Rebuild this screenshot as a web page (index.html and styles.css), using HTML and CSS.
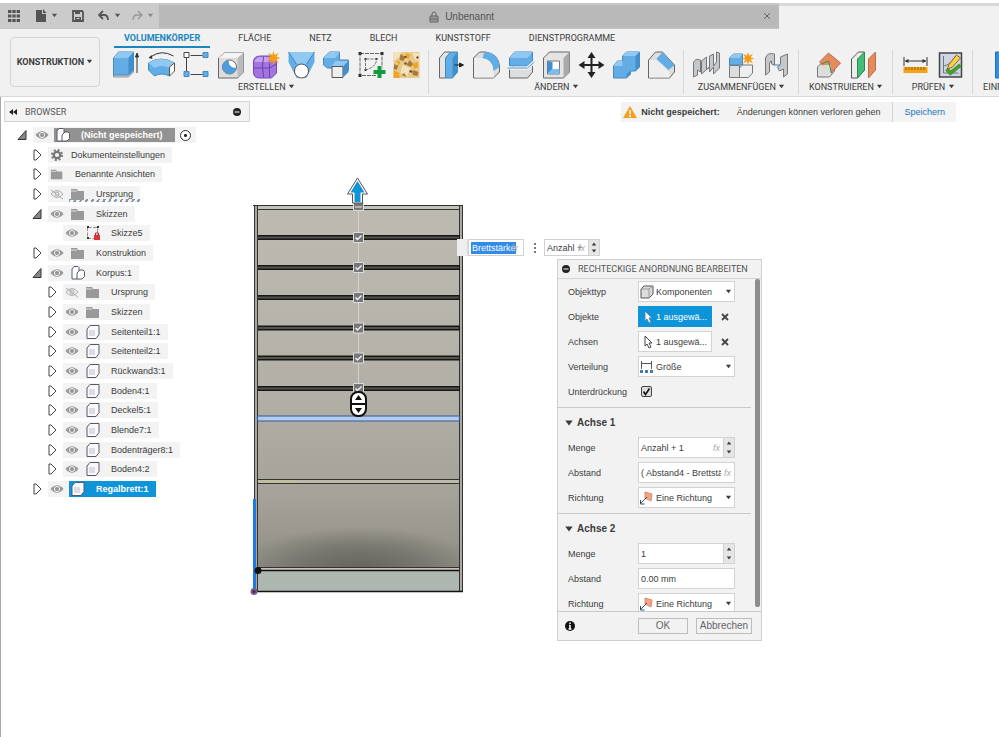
FILE: index.html
```html
<!DOCTYPE html>
<html lang="de">
<head>
    <meta charset="UTF-8">
    <meta name="viewport" content="width=device-width, initial-scale=1.0">
    <title>Unbenannt</title>
    <link rel="stylesheet" href="styles.css">
</head>
<body>
    <!-- Shared icons -->
    <svg class="sprite" aria-hidden="true">
        <symbol id="closed" viewBox="0 0 16 16"><path d="M5 3h2l5 5-5 5H5z" fill="#fff" stroke="#444" stroke-linejoin="round"/></symbol>
        <symbol id="open" viewBox="0 0 16 16"><path d="M12 3.500v9H4z" fill="#888" stroke="#333"/></symbol>
        <symbol id="eye" viewBox="0 0 14 14"><path d="M.5 7Q7-.5 13.500 7 7 14.500.5 7z" fill="#999"/><circle cx="7" cy="7" r="2.600" fill="#999" stroke="#eee"/></symbol>
        <symbol id="eye-off" viewBox="0 0 14 14"><g fill="none" stroke="#aaa"><path d="M1 7Q7 0 13 7 7 14 1 7zM1 3l12 9"/><circle cx="7" cy="7" r="2"/></g></symbol>
        <symbol id="folder" viewBox="0 0 16 14"><path d="M1 2h6l1 2h6v9H1z" fill="#999"/><path d="M1 4h6" stroke="#ddd"/></symbol>
        <symbol id="body" viewBox="0 0 16 16"><path d="M2 5l3-3.500h9v9L11 14.500H2z" fill="#fafafd" stroke="#555a66" stroke-linejoin="round"/><path d="M4 6h6v6H4z" fill="#dcdce6"/></symbol>
        <symbol id="component" viewBox="0 0 16 16"><path d="M2 4l2-2.500h4l1 1V6l1-1h3l1.500 1.500v5L12 14H2z" fill="#fff" stroke="#555a66" stroke-linejoin="round"/><path d="M7 14V8l2-2" fill="none" stroke="#555a66"/></symbol>
        <symbol id="down" viewBox="0 0 8 8"><path d="M1 2h6L4 6z" fill="currentColor"/></symbol>
        <symbol id="up" viewBox="0 0 8 8"><path d="M1 6h6L4 2z" fill="currentColor"/></symbol>
        <symbol id="minus" viewBox="0 0 10 10"><circle cx="5" cy="5" r="4" fill="#222"/><path d="M2.500 5h5" stroke="#fff"/></symbol>
        <symbol id="direction" viewBox="0 0 16 16"><path d="M6 2l7 2-1 7-6-3z" fill="#f0a483" stroke="#d98c6c"/><path d="M2 13l6-6M1.500 10v4h4" fill="none" stroke="#34495e"/></symbol>
        <symbol id="star" viewBox="0 0 12 12"><path d="M6 0l1 3.500L10.500 1.500 8.500 5 12 6 8.500 7l2 3.500L7 8.500 6 12 5 8.500 1.500 10.500 3.500 7 0 6l3.500-1-2-3.500L5 3.500z" fill="#f59b14"/></symbol>
    </svg>

    <header class="titlebar">
        <div class="quick">
            <button aria-label="Datenbedienfeld"><svg width="14" height="14"><path d="M1 2.500h12M1 7h12M1 11.500h12" stroke="#555" stroke-width="3.200" stroke-dasharray="3.400 .9"/></svg></button>
            <button class="file" aria-label="Datei"><svg width="12" height="14"><path d="M1 1h6v4h4v8H1zM8 0l3.500 4H8z" fill="#555"/></svg><svg class="caret"><use href="#down"/></svg></button>
            <button class="save" aria-label="Speichern"><svg width="12" height="12"><path d="M1 1h9l1 1v9H1z" fill="none" stroke="#555" stroke-width="1.800"/><path d="M3 1h5v3H3zM3 7h6v4H3z" fill="#555"/><path d="M4.500 8.500h3" stroke="#ccc"/></svg></button>
            <button aria-label="Rückgängig"><svg width="12" height="12"><path d="M5 1L1 5l4 4M1 5h5q4 0 4 5" fill="none" stroke="#555" stroke-width="1.800"/></svg><svg class="caret"><use href="#down"/></svg></button>
            <button class="redo" aria-label="Wiederherstellen"><svg width="12" height="12"><path d="M7 1l4 4-4 4M11 5H6q-4 0-4 5" fill="none" stroke="#999" stroke-width="1.400"/></svg><svg class="caret"><use href="#down"/></svg></button>
        </div>
        <div class="doc-tab">
            <span class="doc-name"><svg width="12" height="12"><path d="M2 5h8v6H2z" fill="#999" stroke="#666"/><path d="M4 5V3q0-2 2-2t2 2v2M2 8h8" fill="none" stroke="#666"/></svg>Unbenannt</span>
            <button aria-label="Schließen"><svg width="8" height="8"><path d="M1 1l6 6M7 1L1 7" stroke="#666"/></svg></button>
        </div>
        <div class="new-tab"></div>
    </header>

    <section class="ribbon">
        <button class="mode">KONSTRUKTION <svg class="caret"><use href="#down"/></svg></button>
        <div class="tools">
            <nav class="tabs">
                <button class="active">VOLUMENKÖRPER</button>
                <button>FLÄCHE</button>
                <button>NETZ</button>
                <button>BLECH</button>
                <button>KUNSTSTOFF</button>
                <button>DIENSTPROGRAMME</button>
            </nav>
            <div class="groups">
                <div class="group">
                    <div class="icons">
                        <svg viewBox="0 0 28 28"><path d="M1 22v4h15l5-5v-4z" fill="#ccc" stroke="#999"/><path d="M1 7l5-6h15v18l-5 5H1z" fill="#62ade6" stroke="#4788be"/><path d="M1 7l5-6h15l-5 6z" fill="#90c8f2"/><path d="M16 7l5-6v18l-5 5z" fill="#418fcc"/><path d="M24.500 22V4M23 6l1.500-4L26 6z" stroke="#333" fill="#333"/></svg>
                        <svg viewBox="0 0 28 28"><path d="M3 6Q14-2 26 5" fill="none" stroke="#333"/><path d="M1 7l3-3 1 4z" fill="#333"/><path d="M1 12Q13 4 27 12l-5 5v8q-8-4-15 0L1 19z" fill="#62ade6" stroke="#4788be"/><path d="M1 12Q13 4 27 12l-5 5q-8-4-15 0z" fill="#90c8f2"/><path d="M22 16l5-4v8l-5 5z" fill="#fff" stroke="#555"/></svg>
                        <svg viewBox="0 0 28 28"><path d="M4 7v14M8 4.500h12M8 23.500h12" stroke="#444"/><path d="M1.500 1.500h5v5h-5z" fill="#fff" stroke="#444"/><path d="M20.500 1.500h5v5h-5zM20.500 20.500h5v5h-5zM1.500 20.500h5v5h-5z" fill="#62ade6" stroke="#4788be"/></svg>
                        <svg viewBox="0 0 28 28"><path d="M1 7l6-5h19v19l-6 6H1z" fill="#ddd" stroke="#666"/><path d="M1 7l6-5h19l-6 5z" fill="#f4f4f4"/><path d="M20 7l6-5v19l-6 6z" fill="#bbb"/><circle cx="12" cy="16" r="7" fill="#fff" stroke="#667"/><path d="M11 9q-7 2-6 8t8 6q6-1 6-6-8 0-8-8z" fill="#4f9cda"/></svg>
                        <svg viewBox="0 0 28 28"><path d="M1 11q0-6 7-6h12l4 4v13l-5 5H7q-6 0-6-6z" fill="#a274e0" stroke="#7349b5"/><path d="M2 11q1-5 7-5h10l-4 5z" fill="#c5a5f2"/><path d="M11 6q-2 8 0 20M1 17h16l7-4M17 10v16" stroke="#6a42a8" fill="none"/><use href="#star" x="14" y="0" width="14" height="14"/></svg>
                        <svg viewBox="0 0 28 28"><path d="M1 1h26v10L19 27H9L1 11z" fill="#62ade6"/><path d="M1 1l8 12h10l8-12z" fill="#90c8f2"/><path d="M0 12l9 15H0zM28 12l-9 15h9z" fill="#f1f1f1"/><path d="M1 1l8 12M27 1l-8 12" stroke="#4788be" fill="none"/><circle cx="14" cy="20" r="7" fill="#fff" stroke="#555"/></svg>
                        <svg viewBox="0 0 28 28"><path d="M1 7l6-6h10v8h9v10l-5 5h-8v-7H5l-4-3z" fill="#62ade6" stroke="#4788be"/><path d="M1 7l6-6h10l-4 6z" fill="#90c8f2"/><path d="M9 15l4-5h13l-5 5z" fill="#90c8f2"/><path d="M9.500 15.500h11v11h-11z" fill="#eee" stroke="#555"/><path d="M21 15l5-5v11l-5 5z" fill="#418fcc"/></svg>
                        <svg viewBox="0 0 28 28"><path d="M2.500 2.500h22v22h-22z" fill="none" stroke="#444" stroke-width=".8" stroke-dasharray="4 1"/><path d="M1 1h3v3H1zM23 1h3v3h-3zM1 23h3v3H1zM7 7h2v2H7zM18 7h2v2h-2zM7 18h2v2H7z" fill="#333"/><path d="M8 19V8h11q0 8-11 11" fill="none" stroke="#555" stroke-width=".8" stroke-dasharray="3 1"/><path d="M16 21h12M22 15v12" stroke="#f1f1f1" stroke-width="6"/><path d="M16 21h12M22 15v12" stroke="#169b3c" stroke-width="4"/></svg>
                        <svg viewBox="0 0 28 28"><path d="M1 1h26v26H1z" fill="#e9c98a"/><path d="M1 1h8l-3 6-5 3zM10 14l8 3-4 9-6-4zM20 2h7v8l-5-2z" fill="#f3e3bd"/><path d="M8 3l5 3-2 4-4-1zM17 9l4 4-3 3-4-2zM2 13l4 2-2 4-3-1zM21 19l5 2-1 4-5-1zM9 24l3-2 2 4z" fill="#a87a3c"/><path d="M14 2l4 2-2 4-4-2zM4 9l4 2-2 4zM20 13l5-2 1 5-4 2zM1 19l6 3v5H1z" fill="#eda526"/><path d="M12 6h2M12 12l2 1M17 20l3 1M24 6l2 1" stroke="#6e5028" stroke-width="2"/></svg>
                    </div>
                    <button>ERSTELLEN <svg class="caret"><use href="#down"/></svg></button>
                </div>
                <div class="group">
                    <div class="icons">
                        <svg viewBox="0 0 28 28"><path d="M2 7l5-6h6v20l-5 6H2z" fill="#e5e5e5" stroke="#666"/><path d="M8 7l5-6h7v20l-5 6H8z" fill="#62ade6" stroke="#4788be"/><path d="M15 7l5-6v20l-5 6z" fill="#418fcc"/><path d="M17 14h7M22 12l4 2-4 2z" stroke="#222" fill="#222"/></svg>
                        <svg viewBox="0 0 28 28"><path d="M1 7l6-6h6q13 2 14 14v6l-6 6H1z" fill="#ddd" stroke="#666"/><path d="M1.500 7h9q10 2 11 12v7.500h-20z" fill="#eee"/><path d="M12 1q14 0 15 15l-6 4Q21 9 10 7z" fill="#62ade6"/></svg>
                        <svg viewBox="0 0 28 28"><path d="M2 18l5-4h18v7l-5 6H2z" fill="#ddd" stroke="#666"/><path d="M2 7l5-6h18v9l-5 5H2z" fill="#62ade6" stroke="#4788be"/><path d="M2 7l5-6h18l-5 6z" fill="#90c8f2"/><path d="M0 17h20l7-6" fill="none" stroke="#fff" stroke-width="3"/><path d="M0 17h20l7-6" fill="none" stroke="#418fcc"/></svg>
                        <svg viewBox="0 0 28 28"><path d="M1 7l6-6h20v20l-6 6H1z" fill="#e4e4e4" stroke="#666"/><path d="M21 7l6-6v20l-6 6z" fill="#aaa"/><path d="M5 10h12v13H5z" fill="#fff" stroke="#777"/><path d="M5 10l5 1v7l-5 5z" fill="#418fcc"/><path d="M10 18h7v5H5z" fill="#7abdf0"/></svg>
                        <svg viewBox="0 0 28 28"><path d="M14 4v20M4 14h20" stroke="#222" stroke-width="2"/><path d="M14 1l4 6h-8zM14 27l4-6h-8zM1 14l6-4v8zM27 14l-6-4v8z" fill="#222"/></svg>
                        <svg viewBox="0 0 28 28"><path d="M1 15l4-5h5V5l4-4h13v15l-4 4h-5v3l-4 4H1z" fill="#62ade6" stroke="#4788be"/><path d="M10 5l4-4h13l-4 4zM1 15l4-5h5v5z" fill="#90c8f2"/><path d="M23 5l4-4v15l-4 4zM18 20v3l-4 4v-4z" fill="#418fcc"/></svg>
                        <svg viewBox="0 0 28 28"><path d="M1 9l7-8h7l12 13v7l-5 6H1z" fill="#ddd" stroke="#666"/><path d="M1.500 9h7.500l13 12v5.500H1.500z" fill="#eee"/><path d="M15 1l12 13-6 5L9 8z" fill="#62ade6"/></svg>
                    </div>
                    <button>ÄNDERN <svg class="caret"><use href="#down"/></svg></button>
                </div>
                <div class="group">
                    <div class="icons">
                        <svg viewBox="0 0 28 28"><path d="M1 26V12q1-5 7-3v12l-3-2v5zM9 23V10l5-4v12l3-2V5l4-2v12l3-4V1l3 1v15l-6 6v-7l-4 5v-5z" fill="#c5c8ca" stroke="#777" stroke-linejoin="round"/></svg>
                        <svg viewBox="0 0 28 28"><path d="M2 7l4-4h9v11H2z" fill="#62ade6" stroke="#4788be"/><path d="M2 7l4-4h9l-3 4z" fill="#90c8f2"/><path d="M2 14.500h10v12H2z" fill="#ddd" stroke="#777"/><path d="M12 17l3-3h10v8l-4 4.500h-9z" fill="#eee" stroke="#777"/><use href="#star" x="14" y="1" width="13" height="13"/></svg>
                        <svg viewBox="0 0 28 28"><path d="M3 24V7q2-6 9-4v11l-3-1v-3q-2 0-2 3v8zM15 16l3-3V6l7-3v20l-4 3v-8l-4 2z" fill="#c5c8ca" stroke="#777" stroke-linejoin="round"/><path d="M11 14h7" stroke="#4788be"/></svg>
                    </div>
                    <button>ZUSAMMENFÜGEN <svg class="caret"><use href="#down"/></svg></button>
                </div>
                <div class="group wide">
                    <div class="icons">
                        <svg viewBox="0 0 28 28"><path d="M3 16l5-5h12v9l-5 6H3z" fill="#ddd" stroke="#777"/><path d="M14 2l12 10-9 10L5 11z" fill="#e58a5c" stroke="#c06f43"/><path d="M8 14h8v8z" fill="#cfe6d4"/><path d="M7 13l7-3 3 12" fill="none" stroke="#3a8b57"/></svg>
                        <svg viewBox="0 0 28 28"><path d="M2 8l7-7h6v18l-7 8H2z" fill="#eee" stroke="#555"/><path d="M8 8l7-7v18l-7 8z" fill="#45bd74" stroke="#2b8850"/><path d="M19 8l7-7v18l-7 8z" fill="#e58a5c" stroke="#c06f43"/></svg>
                    </div>
                    <button>KONSTRUIEREN <svg class="caret"><use href="#down"/></svg></button>
                </div>
                <div class="group">
                    <div class="icons">
                        <svg viewBox="0 0 28 28"><path d="M2.500 6v9M25.500 6v9M4 10h20" stroke="#333"/><path d="M3 10l4-2v4zM25 10l-4-2v4z" fill="#333"/><path d="M2 16h24v6H2z" fill="#f3a313"/><path d="M4.500 16v3M7.500 16v3M10.500 16v3M13.500 16v3M16.500 16v3M19.500 16v3M22.500 16v3" stroke="#8b5a00"/></svg>
                        <svg viewBox="0 0 28 28"><path d="M3 2h22v24H3z" fill="#cfd5e6" stroke="#444" stroke-width="1.500"/><path d="M7 5v17h15M7 15q7-1 12-10" fill="none" stroke="#777"/><path d="M10 18l4 4 10-8" fill="none" stroke="#4b9a35" stroke-width="4"/><path d="M12 14l8-10 4 3-8 9-5 2z" fill="#f3d24c" stroke="#8b6a20"/></svg>
                    </div>
                    <button>PRÜFEN <svg class="caret"><use href="#down"/></svg></button>
                </div>
                <div class="group last">
                    <div class="icons"><svg viewBox="0 0 28 28"><path d="M1 1h26v26H1z" fill="#2d8fe0" stroke="#1e6fb3"/><path d="M4 23l8-9 8 9z" fill="#b8dcf7"/></svg></div>
                    <button>EINFÜGEN <svg class="caret"><use href="#down"/></svg></button>
                </div>
            </div>
        </div>
    </section>

    <main class="workspace">
        <aside class="browser">
            <h2 class="browser-head"><svg width="10" height="8"><path d="M5 1v6L1 4zM9 1v6L5 4z" fill="#222"/></svg>BROWSER<svg class="dot"><use href="#minus"/></svg></h2>
            <ul class="tree">
                <li><svg class="toggle"><use href="#open"/></svg><div class="node"><svg class="eye"><use href="#eye"/></svg><span class="label root"><svg class="icon"><use href="#component"/></svg>(Nicht gespeichert)</span><input type="radio" checked aria-label="Komponente aktivieren"></div></li>
                <li class="l1"><svg class="toggle"><use href="#closed"/></svg><div class="node"><svg class="eye" viewBox="0 0 14 14"><circle cx="7" cy="7" r="3.200" fill="none" stroke="#777" stroke-width="2.200"/><circle cx="7" cy="7" r="5" fill="none" stroke="#777" stroke-width="2" stroke-dasharray="2 1.930"/></svg><span class="label plain">Dokumenteinstellungen</span></div></li>
                <li class="l1"><svg class="toggle"><use href="#closed"/></svg><div class="node"><svg class="eye"><use href="#folder"/></svg><span class="label plain views">Benannte Ansichten</span></div></li>
                <li class="l1"><svg class="toggle"><use href="#closed"/></svg><div class="node"><svg class="eye"><use href="#eye-off"/></svg><span class="label marked"><svg class="icon"><use href="#folder"/></svg>Ursprung</span></div></li>
                <li class="l1"><svg class="toggle"><use href="#open"/></svg><div class="node"><svg class="eye"><use href="#eye"/></svg><span class="label"><svg class="icon"><use href="#folder"/></svg>Skizzen</span></div></li>
                <li class="l2"><svg class="toggle"></svg><div class="node"><svg class="eye"><use href="#eye"/></svg><span class="label"><svg class="icon" viewBox="0 0 16 16"><path d="M2.500 2.500h10v11h-10z" fill="none" stroke="#777" stroke-width=".8" stroke-dasharray="4 1.500"/><path d="M2 1h2v2H2zM12 1h2v2h-2zM2 12h2v2H2z" fill="#333"/><path d="M9 10h6v5H9z" fill="#d9333f"/><path d="M10.500 10V8h3v2" fill="none" stroke="#b5202d"/></svg>Skizze5</span></div></li>
                <li class="l1"><svg class="toggle"><use href="#closed"/></svg><div class="node"><svg class="eye"><use href="#eye"/></svg><span class="label"><svg class="icon"><use href="#folder"/></svg>Konstruktion</span></div></li>
                <li class="l1"><svg class="toggle"><use href="#open"/></svg><div class="node"><svg class="eye"><use href="#eye"/></svg><span class="label"><svg class="icon"><use href="#component"/></svg>Korpus:1</span></div></li>
                <li class="l2"><svg class="toggle"><use href="#closed"/></svg><div class="node"><svg class="eye"><use href="#eye-off"/></svg><span class="label"><svg class="icon"><use href="#folder"/></svg>Ursprung</span></div></li>
                <li class="l2"><svg class="toggle"><use href="#closed"/></svg><div class="node"><svg class="eye"><use href="#eye"/></svg><span class="label"><svg class="icon"><use href="#folder"/></svg>Skizzen</span></div></li>
                <li class="l2"><svg class="toggle"><use href="#closed"/></svg><div class="node"><svg class="eye"><use href="#eye"/></svg><span class="label"><svg class="icon"><use href="#body"/></svg>Seitenteil1:1</span></div></li>
                <li class="l2"><svg class="toggle"><use href="#closed"/></svg><div class="node"><svg class="eye"><use href="#eye"/></svg><span class="label"><svg class="icon"><use href="#body"/></svg>Seitenteil2:1</span></div></li>
                <li class="l2"><svg class="toggle"><use href="#closed"/></svg><div class="node"><svg class="eye"><use href="#eye"/></svg><span class="label"><svg class="icon"><use href="#body"/></svg>Rückwand3:1</span></div></li>
                <li class="l2"><svg class="toggle"><use href="#closed"/></svg><div class="node"><svg class="eye"><use href="#eye"/></svg><span class="label"><svg class="icon"><use href="#body"/></svg>Boden4:1</span></div></li>
                <li class="l2"><svg class="toggle"><use href="#closed"/></svg><div class="node"><svg class="eye"><use href="#eye"/></svg><span class="label"><svg class="icon"><use href="#body"/></svg>Deckel5:1</span></div></li>
                <li class="l2"><svg class="toggle"><use href="#closed"/></svg><div class="node"><svg class="eye"><use href="#eye"/></svg><span class="label"><svg class="icon"><use href="#body"/></svg>Blende7:1</span></div></li>
                <li class="l2"><svg class="toggle"><use href="#closed"/></svg><div class="node"><svg class="eye"><use href="#eye"/></svg><span class="label"><svg class="icon"><use href="#body"/></svg>Bodenträger8:1</span></div></li>
                <li class="l2"><svg class="toggle"><use href="#closed"/></svg><div class="node"><svg class="eye"><use href="#eye"/></svg><span class="label"><svg class="icon"><use href="#body"/></svg>Boden4:2</span></div></li>
                <li class="l1"><svg class="toggle"><use href="#closed"/></svg><div class="node"><svg class="eye"><use href="#eye"/></svg><span class="label selected"><svg class="icon"><use href="#body"/></svg>Regalbrett:1</span></div></li>
            </ul>
        </aside>

        <div class="notice">
            <svg width="14" height="12"><path d="M7 0l7 12H0z" fill="#f2a023"/><path d="M7 4v4M7 9v2" stroke="#fff" stroke-width="1.500"/></svg>
            <strong>Nicht gespeichert:</strong>
            <span>Änderungen können verloren gehen</span>
            <a href="#">Speichern</a>
        </div>

        <!-- Shelf model -->
        <svg class="model" viewBox="246 173 222 426" role="img" aria-label="Korpus">
            <defs>
                <linearGradient id="panel" x1="0" y1="0" x2="0" y2="1">
                    <stop offset="0" stop-color="#bcbab1"/>
                    <stop offset=".5" stop-color="#b2b0a7"/>
                    <stop offset=".8" stop-color="#a5a399"/>
                    <stop offset="1" stop-color="#908e85"/>
                </linearGradient>
                <radialGradient id="shade" cx=".5" cy="1" r=".6">
                    <stop offset="0" stop-color="#66655e"/>
                    <stop offset=".5" stop-color="#66655e" stop-opacity=".6"/>
                    <stop offset="1" stop-color="#66655e" stop-opacity="0"/>
                </radialGradient>
            </defs>
            <path d="M254 206h209v386H254z" fill="#aaa9a1"/>
            <path d="M258 209h201v358H258z" fill="url(#panel)"/>
            <path d="M258 500h201v67H258z" fill="url(#shade)"/>
            <path d="M258 206h201v3H258z" fill="#c3c2b9"/>
            <path d="M258 571h201v20H258z" fill="#aeb6b0"/>
            <path d="M258 567h201v3H258z" fill="#c8bfb9"/>
            <g fill="none" stroke="#33322f">
                <path d="M254.500 592V205.500h208V592M253 205.500h210M257.500 206v385M459.500 206v385M258 209.500h201"/>
                <path d="M258 479.500h201M258 483.500h201M258 567.500h201"/>
                <path d="M258 570.500h201M253 591.500h210" stroke="#111" stroke-width="1.500"/>
            </g>
            <path d="M258 480h201v3H258z" fill="#bdbbae"/>
            <path d="M258 482h40" stroke="#c9bf87"/>
            <path d="M258 237.500h202M258 267.500h202M258 297.500h202M258 328h202M258 358h202M258 388.500h202" stroke="#171715" stroke-width="5"/>
            <path d="M258 237.500h201M258 267.500h201M258 297.500h201M258 328h201M258 358h201M258 388.500h201" stroke="#55534e" stroke-width="2"/>
            <path d="M257.500 416h202v5h-202z" fill="#b3cbec" stroke="#35569a" stroke-width="1.200"/>
            <path d="M358.500 210v180" stroke="#ddd" stroke-opacity=".7"/>
            <g fill="#777" stroke="#ddd">
                <path d="M353.500 202.500h10v8h-10zM353.500 232.500h10v10h-10zM353.500 262.500h10v10h-10zM353.500 292.500h10v10h-10zM353.500 323h10v10h-10zM353.500 353h10v10h-10zM353.500 383.500h10v10h-10z"/>
            </g>
            <path d="M355 207h7" stroke="#eee"/>
            <path d="M355.500 237.500l2 2 4-4M355.500 267.500l2 2 4-4M355.500 297.500l2 2 4-4M355.500 328l2 2 4-4M355.500 358l2 2 4-4M355.500 388.500l2 2 4-4" fill="none" stroke="#eee" stroke-width="1.500"/>
            <path d="M357.500 178l10 16h-5v9h-10v-9h-5z" fill="#fff" stroke="#555"/>
            <path d="M357.500 181l7 11.500h-4V202h-6v-9.500h-4z" fill="#0f94d6"/>
            <rect x="351" y="392" width="15" height="24" rx="7" fill="#fff" stroke="#111" stroke-width="2"/>
            <path d="M351 404h15" stroke="#111" stroke-width="2"/>
            <path d="M355 400l3.500-5 3.500 5zM355 408l3.500 5 3.500-5z" fill="#111"/>
            <path d="M254.500 499v91" stroke="#1c7be0" stroke-width="3"/>
            <circle cx="258" cy="570.500" r="3.500" fill="#111"/>
            <circle cx="254" cy="591.500" r="2.500" fill="#333" stroke="#7b5a96" stroke-width="2"/>
        </svg>

        <!-- Value boxes on the canvas -->
        <div class="floating">
            <span class="grip"></span>
            <div class="edit"><input class="marked-value" value="Brettstärke" aria-label="Brettstärke"><em>fx</em></div>
            <svg class="more" width="4" height="12"><path d="M0 1h2v2H0zM0 5h2v2H0zM0 9h2v2H0z" fill="#777"/></svg>
            <div class="edit count"><input value="Anzahl + 1" aria-label="Anzahl"><em>fx</em><span class="spin"><button aria-label="Mehr"><svg class="caret"><use href="#up"/></svg></button><button aria-label="Weniger"><svg class="caret"><use href="#down"/></svg></button></span></div>
        </div>

        <form class="dialog">
            <h2 class="dialog-head"><svg class="dot"><use href="#minus"/></svg>RECHTECKIGE ANORDNUNG BEARBEITEN</h2>
            <div class="dialog-body">
                <div class="fields">
                    <section>
                        <div class="row"><label for="type">Objekttyp</label><div class="pick"><svg class="icon" viewBox="0 0 16 16"><path d="M2 5l3-3h9v8l-4 4H2z" fill="#ddd" stroke="#555"/><path d="M2 5h8v9M10 5l4-3" fill="none" stroke="#999"/></svg><select id="type"><option>Komponenten</option></select><svg class="caret"><use href="#down"/></svg></div></div>
                        <div class="row"><label for="objects">Objekte</label><button type="button" id="objects" class="choose on"><svg width="10" height="14"><path d="M2 1v10l2-2 2 4 2-1-2-4h3z" fill="#fff" stroke="#58a"/></svg>1 ausgewä...</button><button type="button" class="clear" aria-label="Objekte löschen"><svg width="8" height="8"><path d="M1 1l6 6M7 1L1 7" stroke="#444" stroke-width="1.800"/></svg></button></div>
                        <div class="row"><label for="axes">Achsen</label><button type="button" id="axes" class="choose"><svg width="10" height="14"><path d="M2 1v10l2-2 2 4 2-1-2-4h3z" fill="#fff" stroke="#444"/></svg>1 ausgewä...</button><button type="button" class="clear" aria-label="Achsen löschen"><svg width="8" height="8"><path d="M1 1l6 6M7 1L1 7" stroke="#444" stroke-width="1.800"/></svg></button></div>
                        <div class="row"><label for="spread">Verteilung</label><div class="pick"><svg class="icon" viewBox="0 0 16 16"><path d="M2.500 2v8M12.500 2v8M3 4.500h9" stroke="#555"/><path d="M1 11h3v3H1zM6 11h3v3H6zM11 11h3v3h-3z" fill="#467aa8"/></svg><select id="spread"><option>Größe</option></select><svg class="caret"><use href="#down"/></svg></div></div>
                        <div class="row"><label for="suppress">Unterdrückung</label><span class="check"><input type="checkbox" id="suppress" checked><svg width="11" height="11"><path d="M2.500 5.500l2 3 4-6" fill="none" stroke="#111" stroke-width="1.600"/></svg></span></div>
                    </section>
                    <section>
                        <h3><svg class="caret"><use href="#down"/></svg>Achse 1</h3>
                        <div class="row"><label for="count1">Menge</label><div class="edit"><input id="count1" value="Anzahl + 1"><em>fx</em><span class="spin"><button type="button" aria-label="Mehr"><svg class="caret"><use href="#up"/></svg></button><button type="button" aria-label="Weniger"><svg class="caret"><use href="#down"/></svg></button></span></div></div>
                        <div class="row"><label for="gap1">Abstand</label><div class="edit"><input id="gap1" value="( Abstand4 - Brettstärke )"><em>fx</em></div></div>
                        <div class="row"><label for="dir1">Richtung</label><div class="pick"><svg class="icon"><use href="#direction"/></svg><select id="dir1"><option>Eine Richtung</option></select><svg class="caret"><use href="#down"/></svg></div></div>
                    </section>
                    <section>
                        <h3><svg class="caret"><use href="#down"/></svg>Achse 2</h3>
                        <div class="row"><label for="count2">Menge</label><div class="edit"><input id="count2" value="1"><span class="spin"><button type="button" aria-label="Mehr"><svg class="caret"><use href="#up"/></svg></button><button type="button" aria-label="Weniger"><svg class="caret"><use href="#down"/></svg></button></span></div></div>
                        <div class="row"><label for="gap2">Abstand</label><div class="edit"><input id="gap2" value="0.00 mm"></div></div>
                        <div class="row"><label for="dir2">Richtung</label><div class="pick"><svg class="icon"><use href="#direction"/></svg><select id="dir2"><option>Eine Richtung</option></select><svg class="caret"><use href="#down"/></svg></div></div>
                    </section>
                </div>
                <div class="scrollbar"></div>
            </div>
            <footer class="dialog-foot">
                <svg width="12" height="12"><circle cx="6" cy="6" r="5" fill="#111"/><path d="M6 2.500v1.500M6 5v4M4.500 9h3M5 5.500h1" stroke="#fff" stroke-width="1.500"/></svg>
                <button type="button">OK</button>
                <button type="button">Abbrechen</button>
            </footer>
        </form>
    </main>
</body>
</html>
```
FILE: styles.css
```css
/* General Styles */
* {
    box-sizing: border-box;
}
body {
    display: flex;
    flex-direction: column;
    min-height: 100vh;
    margin: 0;
    padding-top: 3px;
    font-family: "Liberation Sans", Arial, sans-serif;
    font-size: 9px;
    line-height: 12px;
    color: #3c3c3c;
    background: #fff;
    overflow: hidden;
}
button, input, select {
    margin: 0;
    padding: 0;
    border: 0;
    border-radius: 0;
    background: none;
    font: inherit;
    color: inherit;
}
h2, h3, ul {
    margin: 0;
    padding: 0;
    font-weight: normal;
    font-size: 9px;
}
svg {
    flex: none;
}
.sprite {
    position: absolute;
    width: 0;
    height: 0;
}
.caret {
    width: 7px;
    height: 7px;
}
.icon {
    width: 16px;
    height: 16px;
}
.dot {
    width: 10px;
    height: 10px;
}

/* Title bar */
.titlebar {
    display: flex;
    height: 26px;
    background: #cbcbcb;
    border-bottom: 1px solid #c4c4c4;
}
.quick {
    display: flex;
    align-items: center;
    gap: 14px;
    width: 159px;
    padding-left: 7px;
    color: #555;
}
.quick button {
    display: flex;
    align-items: center;
    gap: 4px;
}
.quick .redo {
    margin-left: -4px;
    color: #888;
}
.doc-tab {
    display: flex;
    align-items: center;
    flex: 1;
    padding-right: 8px;
    background: #b9b9b9;
    border-top: 2px solid #c6c6c6;
    border-radius: 0 3px 0 0;
}
.doc-name {
    display: flex;
    align-items: center;
    justify-content: center;
    gap: 5px;
    flex: 1;
    font-size: 10px;
    color: #555;
}
.new-tab {
    width: 22%;
    margin-bottom: -1px;
    border-top: 3px solid #d8d8d8;
    background: #f1f1f1;
}

/* Ribbon */
.ribbon {
    display: flex;
    height: 68px;
    background: #f1f1f1;
    border-bottom: 1px solid #d8d8d8;
    font-family: Roboto, sans-serif;
}
.ribbon button {
    white-space: nowrap;
}
.ribbon .mode {
    width: 90px;
    height: 50px;
    margin: 8px 4px 0 10px;
    border: 1px solid #d5d5d5;
    border-radius: 4px;
    font-weight: bold;
}
.tools {
    flex: 1;
    min-width: 0;
}
.tabs {
    display: flex;
    gap: 18px;
    padding-left: 10px;
}
.tabs button {
    height: 19px;
    padding: 0 10px;
    border-bottom: 2px solid transparent;
}
.tabs .active {
    color: #1a86c0;
    border-color: #1a86c0;
    font-weight: bold;
}
.groups {
    display: flex;
    padding-top: 2px;
}
.group {
    display: flex;
    flex: none;
    flex-direction: column;
    align-items: center;
    height: 44px;
    padding: 0 4px 0 5px;
    border-right: 1px solid #d8d8d8;
}
.icons {
    display: flex;
    height: 31px;
}
.icons svg {
    width: 35px;
    height: 30px;
    padding: 1px 3px;
}
.group.wide {
    padding: 0 9px 0 10px;
}
.group.last {
    align-items: flex-start;
    padding-left: 10px;
    border: 0;
}
.group.last .icons {
    padding-left: 8px;
}

/* Workspace */
.workspace {
    position: relative;
    display: flex;
    justify-content: space-between;
    align-items: flex-start;
    flex: 1;
    padding: 4px 43px 0 4px;
    border-left: 1px solid #aaa;
}

/* Browser tree */
.browser {
    width: 246px;
    margin-left: -1px;
}
.browser-head {
    display: flex;
    align-items: center;
    gap: 7px;
    height: 21px;
    padding: 0 7px 0 3px;
    background: #f3f3f3;
    border: 1px solid #d4d4d4;
    font-family: Roboto, sans-serif;
    color: #555;
}
.browser-head .dot {
    margin-left: auto;
}
.tree {
    display: flex;
    flex-direction: column;
    justify-content: space-between;
    height: 370px;
    margin-top: 5px;
    padding-left: 10px;
    list-style: none;
}
.tree li {
    display: flex;
    align-items: center;
    gap: 3px;
    height: 16px;
}
.tree .l1 {
    padding-left: 15px;
}
.tree .l2 {
    padding-left: 30px;
}
.toggle {
    width: 16px;
    height: 16px;
}
.node {
    display: flex;
    align-items: center;
    gap: 5px;
    height: 16px;
    padding-left: 2px;
    background: #f3f3f3;
}
.eye {
    width: 14px;
    height: 14px;
}
.label {
    display: flex;
    align-items: center;
    gap: 10px;
    height: 16px;
    padding: 0 7px 0 1px;
}
.label.plain {
    padding-left: 2px;
}
.label.views {
    padding-left: 6px;
}
.label.root {
    height: 14px;
    padding-right: 12px;
    background: #929292;
    color: #fff;
    font-weight: bold;
}
.label.selected {
    background: #0e94d8;
    color: #fff;
    font-weight: bold;
}
.label.marked {
    background: repeating-linear-gradient(120deg, #7f95a8 0 2px, transparent 2px 5px) bottom / 100% 3px no-repeat;
}
.node input {
    appearance: none;
    width: 11px;
    height: 11px;
    margin-right: 5px;
    border: 1px solid #333;
    border-radius: 50%;
    background: radial-gradient(#222 1px, #fff 2px);
}

/* Save notice */
.notice {
    display: flex;
    align-items: center;
    height: 20px;
    margin-top: 1px;
    background: #f3f3f3;
}
.notice svg {
    margin: 0 4px 0 2px;
}
.notice span {
    padding: 0 12px 0 17px;
}
.notice a {
    padding: 4px 11px;
    border-left: 1px solid #d4d4d4;
    color: #1a73b8;
    text-decoration: none;
}

/* Model and canvas inputs */
.model {
    position: absolute;
    left: 245px;
    top: 76px;
    width: 222px;
    height: 426px;
}
.floating {
    position: absolute;
    left: 456px;
    top: 142px;
    display: flex;
    align-items: center;
}
.grip {
    width: 11px;
    height: 17px;
    background: #eee;
    border-right: 1px solid #ddd;
}
.floating .edit {
    width: 56px;
    height: 17px;
    padding: 0 2px;
}
.floating .marked-value {
    height: 12px;
    padding-left: 1px;
    background: #318be8;
    color: #fff;
}
.floating em {
    margin-left: -8px;
}
.more {
    margin: 0 6px 0 10px;
}
.floating .count {
    padding: 0;
}

/* Dialog */
.dialog {
    position: absolute;
    left: 556px;
    top: 162px;
    display: flex;
    flex-direction: column;
    width: 205px;
    height: 382px;
    background: #f2f2f2;
    border: 1px solid #cfcfcf;
}
.dialog-head {
    display: flex;
    align-items: center;
    gap: 7px;
    height: 19px;
    padding-left: 3px;
    border-bottom: 1px solid #d4d4d4;
    font-family: Roboto, sans-serif;
    color: #555;
    white-space: nowrap;
}
.dialog-body {
    display: flex;
    flex: 1;
    min-height: 0;
    overflow: hidden;
}
.fields {
    flex: 1;
}
.fields section {
    padding-bottom: 3px;
}
.fields section + section {
    padding-top: 2px;
    border-top: 1px solid #c8c8c8;
}
.scrollbar {
    width: 5px;
    margin: 0 1px 4px 4px;
    background: #8e8e8e;
    border-radius: 2px;
}
.row {
    display: flex;
    align-items: center;
    height: 25px;
    padding-left: 10px;
}
.row label {
    width: 70px;
}
.fields h3 {
    display: flex;
    align-items: center;
    gap: 3px;
    height: 25px;
    padding-left: 6px;
    font-size: 10px;
    font-weight: bold;
}
.fields h3 .caret {
    width: 10px;
    height: 10px;
}
.pick, .edit {
    display: flex;
    align-items: center;
    width: 97px;
    height: 21px;
    background: #fff;
    border: 1px solid #d2d2d2;
}
.pick {
    padding: 0 2px 0 0;
}
.pick select {
    appearance: none;
    flex: 1;
    min-width: 0;
    padding-left: 1px;
}
.edit input {
    flex: 1;
    min-width: 0;
    padding-left: 2px;
}
.edit em {
    padding: 0 3px;
    color: #aaa;
}
.spin {
    display: flex;
    flex-direction: column;
    align-self: stretch;
    width: 11px;
    background: #e6e6e6;
    border-left: 1px solid #d2d2d2;
}
.spin button {
    display: flex;
    align-items: center;
    justify-content: center;
    flex: 1;
    min-height: 0;
}
.spin .caret {
    width: 6px;
    height: 6px;
}
.choose {
    display: flex;
    align-items: center;
    gap: 3px;
    width: 74px;
    height: 21px;
    padding-left: 4px;
    background: #fff;
    border: 1px solid #d2d2d2;
    white-space: nowrap;
}
.choose.on {
    background: #0e94d8;
    border-color: #0e94d8;
    color: #fff;
}
.clear {
    display: flex;
    padding: 0 9px;
}
.check {
    display: grid;
    margin-left: 3px;
}
.check input, .check svg {
    grid-area: 1 / 1;
}
.check input {
    appearance: none;
    width: 11px;
    height: 11px;
    border: 1px solid #444;
    border-radius: 2px;
    background: #ddd;
}
.check svg {
    pointer-events: none;
}
.dialog-foot {
    display: flex;
    align-items: center;
    height: 29px;
    padding: 0 9px 0 6px;
    border-top: 1px solid #c8c8c8;
}
.dialog-foot svg {
    margin-right: auto;
}
.dialog-foot button {
    width: 50px;
    height: 16px;
    border: 1px solid #bdbdbd;
    font-size: 10px;
    color: #666;
}
.dialog-foot button + button {
    width: 56px;
    margin-left: 8px;
}
```
